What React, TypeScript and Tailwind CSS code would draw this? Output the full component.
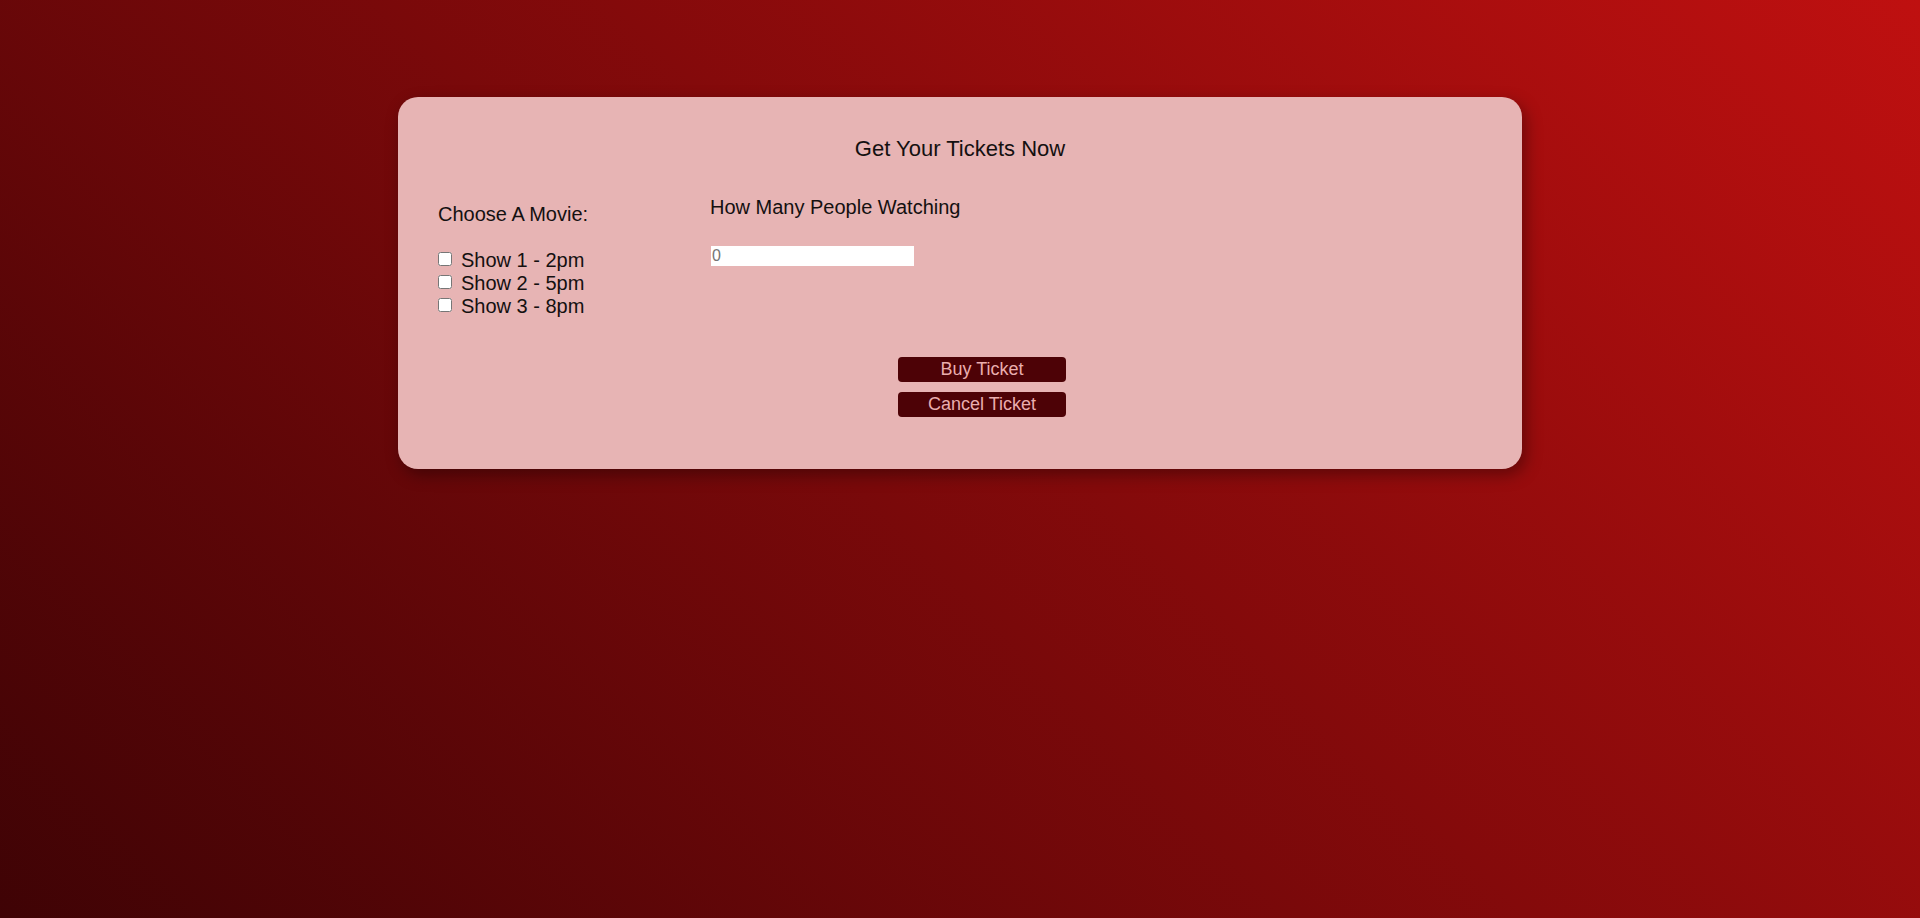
import React from "react";

export default function App() {
  const shows = ["Show 1 - 2pm", "Show 2 - 5pm", "Show 3 - 8pm"];
  return (
    <div className="min-h-[918px] w-full bg-[linear-gradient(45deg,#3f0305,#bf1010)] pt-[97px] font-['Liberation_Sans',Arial,sans-serif]">
      <div className="mx-auto flex h-[372px] w-[1124px] flex-col rounded-[20px] bg-[#e7b4b4] pl-[40px] pt-[39px] text-[#141010] shadow-[4px_6px_16px_rgba(0,0,0,0.35)]">
        <h1 className="-ml-[40px] text-center text-[22px] leading-[26px] font-normal">
          Get Your Tickets Now
        </h1>
        <div className="mt-[34px] flex">
          <div className="w-[272px] pt-[7px]">
            <p className="text-[20px] leading-[23px]">Choose A Movie:</p>
            <div className="mt-[23px] flex flex-col">
              {shows.map((s) => (
                <label key={s} className="flex items-start text-[20px] leading-[23px]">
                  <input type="checkbox" className="mt-[3px] mr-[9px] h-[14px] w-[14px]" />
                  <span>{s}</span>
                </label>
              ))}
            </div>
          </div>
          <div className="flex flex-col items-start">
            <p className="text-[20px] leading-[23px]">How Many People Watching</p>
            <input
              type="text"
              placeholder="0"
              className="mt-[27px] ml-[1px] h-[20px] w-[203px] bg-white px-[1px] text-[16px] leading-[20px] text-[#222] outline-none placeholder:text-[#757575]"
            />
          </div>
        </div>
        <div className="mt-[39px] ml-[460px] flex w-[168px] flex-col gap-[10px]">
          <button className="h-[25px] w-[168px] rounded-[4px] bg-[#4d0206] text-[18px] leading-[25px] text-[#eaaeae]">
            Buy Ticket
          </button>
          <button className="h-[25px] w-[168px] rounded-[4px] bg-[#4d0206] text-[18px] leading-[25px] text-[#eaaeae]">
            Cancel Ticket
          </button>
        </div>
      </div>
    </div>
  );
}
